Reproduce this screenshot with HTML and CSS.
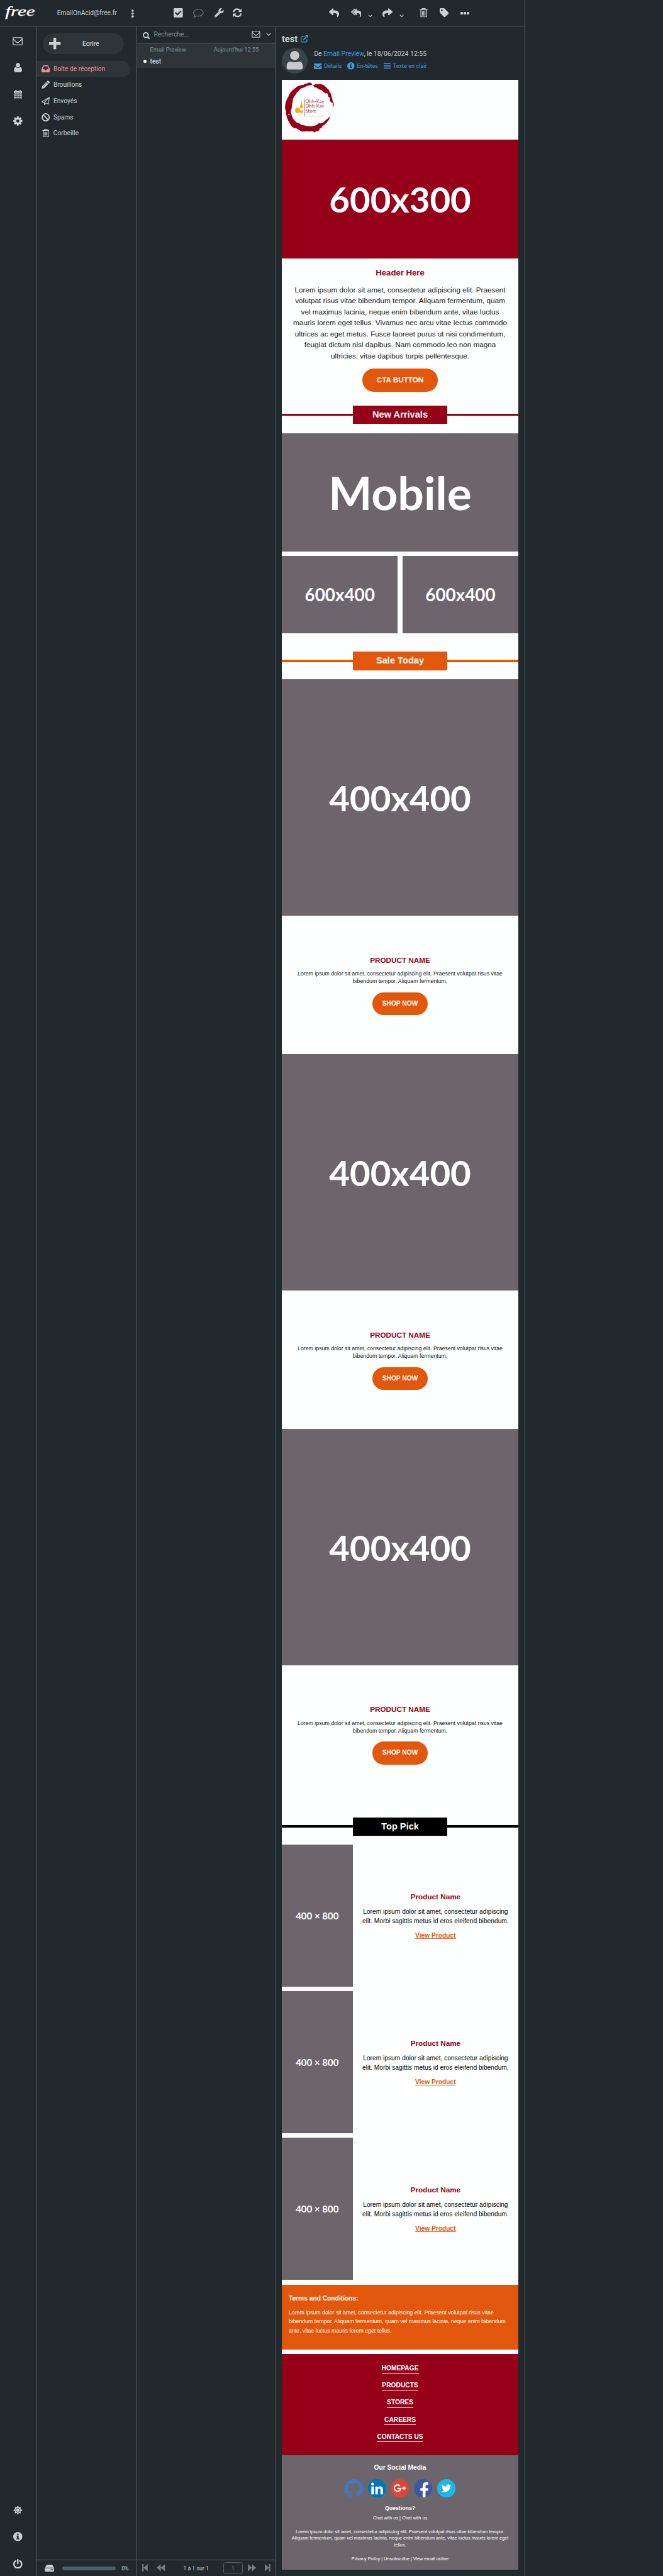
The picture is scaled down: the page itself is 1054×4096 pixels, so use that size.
FILE: index.html
```html
<!DOCTYPE html>
<html lang="fr">
<head>
<meta charset="utf-8">
<title>Boîte de réception</title>
<link rel="stylesheet" href="styles.css">
</head>
<body>
<svg class="sprite" aria-hidden="true">
  <symbol id="i-chevron" viewBox="0 0 10 6"><path d="M1 1l4 4 4-4" fill="none" stroke="currentColor" stroke-width="1.5"/></symbol>
  <symbol id="i-trash" viewBox="0 0 18 20"><path d="M0.5 3.6h17M5.8 3.4V1h6.4v2.4M2.8 4v14.8h12.4V4M6.2 7v9M9 7v9M11.8 7v9" fill="none" stroke="currentColor" stroke-width="1.7"/></symbol>
  <symbol id="i-mail" viewBox="0 0 22 18"><path d="M1.1 1.1h19.8v15.8H1.1zM1.3 4l7.6 7.2q2.1 1.8 4.2 0L20.700 4" fill="none" stroke="currentColor" stroke-width="1.7" stroke-linejoin="round"/></symbol>
  <symbol id="i-reply" viewBox="0 24 512 462"><path fill="currentColor" d="M8.309 189.836L184.313 37.851C199.719 24.546 224 35.347 224 56.015v80.053c160.629 1.839 288 34.032 288 186.258 0 61.441-39.581 122.309-83.333 154.132-13.653 9.931-33.111-2.533-28.077-18.631 45.344-145.012-21.507-183.51-176.59-185.742V360c0 20.7-24.3 31.453-39.687 18.164l-176.004-152c-11.071-9.562-11.086-26.753 0-36.328z"/></symbol>
  <symbol id="i-info" viewBox="0 0 20 20"><circle cx="10" cy="10" r="10" fill="currentColor"/><path class="cut" d="M8.300 3.600h3.400v3H8.300zM6.800 8h4.900v6h1.500v2H6.800v-2h1.500v-4H6.800z"/></symbol>
</svg>

<div class="app">
  <header class="topbar">
    <svg class="brand" viewBox="0 0 72 30"><text x="3" y="21" textLength="65" lengthAdjust="spacingAndGlyphs">free</text></svg>
    <span class="account">EmailOnAcid@free.fr</span>
    <svg class="ic dots-v" viewBox="0 0 5 18"><g fill="currentColor"><circle cx="2.500" cy="2.700" r="2.500"/><circle cx="2.500" cy="9" r="2.500"/><circle cx="2.500" cy="15.300" r="2.500"/></g></svg>
    <svg class="ic t-check" viewBox="0 32 448 448"><path fill="currentColor" d="M400 480H48c-26.510 0-48-21.490-48-48V80c0-26.510 21.490-48 48-48h352c26.510 0 48 21.490 48 48v352c0 26.510-21.490 48-48 48zm-204.686-98.059l184-184c6.248-6.248 6.248-16.379 0-22.627l-22.627-22.627c-6.248-6.248-16.379-6.249-22.628 0L184 302.745l-70.059-70.059c-6.248-6.248-16.379-6.248-22.628 0l-22.627 22.627c-6.248 6.248-6.248 16.379 0 22.627l104 104c6.249 6.250 16.379 6.250 22.628.001z"/></svg>
    <svg class="ic t-comment" viewBox="0 0 23 19"><path d="M11.500 1C5.500 1 1 4.100 1 8.300c0 2.100 1.200 4 3 5.300-.3 1.700-1.200 3-2.300 4.200 2.500 0 4.500-.9 6-2.400 1.200.3 2.500.4 3.800.4 6 0 10.500-3.300 10.500-7.500S17.500 1 11.500 1z" fill="none" stroke="currentColor" stroke-width="1.600" stroke-linejoin="round"/></svg>
    <svg class="ic t-wrench" viewBox="0 0 512 512"><path fill="currentColor" d="M507.730 109.100c-2.240-9.030-13.540-12.090-20.120-5.510l-74.360 74.360-67.880-11.310-11.310-67.880 74.360-74.360c6.620-6.620 3.430-17.900-5.660-20.160-47.380-11.740-99.550.91-136.580 37.930-39.640 39.640-50.550 97.100-34.050 147.200L18.740 402.760c-24.990 24.990-24.990 65.510 0 90.500 24.990 24.990 65.510 24.990 90.500 0l213.210-213.210c50.120 16.710 107.470 5.680 147.370-34.220 37.070-37.070 49.700-89.320 37.910-136.730zM64 472c-13.250 0-24-10.750-24-24 0-13.260 10.750-24 24-24s24 10.740 24 24c0 13.250-10.750 24-24 24z"/></svg>
    <svg class="ic t-sync" viewBox="0 0 20 20"><path d="M1.800 8.500C2.500 4.600 5.900 2 9.800 2c2.700 0 4.800 1.100 6.400 3M18.200 11.500C17.500 15.400 14.100 18 10.200 18c-2.700 0-4.800-1.100-6.400-3" fill="none" stroke="currentColor" stroke-width="3.200"/><path fill="currentColor" d="M19.600.6v7.800h-7.800zM.4 19.400v-7.800h7.800z"/></svg>
    <svg class="ic t-reply"><use href="#i-reply"/></svg>
    <svg class="ic t-replyall" viewBox="0 0 576 462"><path fill="currentColor" d="M8 166L184 13c12-10 28-6 36 6v36L82 178c-5 5-5 14 0 19l138 122v36c-8 12-24 14-36 4L8 203c-11-10-11-27 0-37z"/><path fill="currentColor" d="M130 166L282 13c14-14 38-4 38 18v81c150 2 256 34 256 186 0 62-36 122-76 154-12 10-30-2-26-18 40-145-14-184-154-186v88c0 22-24 32-38 18L130 203c-10-10-10-27 0-37z"/></svg>
    <svg class="ic t-chev"><use href="#i-chevron"/></svg>
    <svg class="ic t-forward"><use href="#i-reply"/></svg>
    <svg class="ic t-chev"><use href="#i-chevron"/></svg>
    <svg class="ic t-trash"><use href="#i-trash"/></svg>
    <svg class="ic t-tag" viewBox="0 0 20 20"><path fill="currentColor" fill-rule="evenodd" d="M0 1.800V8.500q0 1 .8 1.800l8.700 9q1 .9 2 0l8-7.300q.9-1 0-2L10.500.8Q9.700 0 8.600 0H1.800Q0 0 0 1.800zM4.600 2.800a1.800 1.800 0 1 0 .01 0z"/></svg>
    <svg class="ic t-more" viewBox="0 0 19 6"><g fill="currentColor"><rect width="5.400" height="6" rx="1.500"/><rect x="6.800" width="5.400" height="6" rx="1.500"/><rect x="13.600" width="5.400" height="6" rx="1.500"/></g></svg>
  </header>

  <nav class="rail">
    <svg class="ic r-mail"><use href="#i-mail"/></svg>
    <svg class="ic r-user" viewBox="0 0 18 21"><path fill="currentColor" d="M9 0c3 0 4.600 2.200 4.600 5.200S11.700 10.600 9 10.600 4.400 8.200 4.400 5.200 6 0 9 0zM4.300 9.400C5.600 11 7.200 11.700 9 11.700s3.400-.7 4.700-2.300C16.600 9.900 18 12 18 16.500c0 3-1.300 4.500-3.500 4.500h-11C1.300 21 0 19.500 0 16.500 0 12 1.400 9.900 4.300 9.400z"/></svg>
    <svg class="ic r-cal" viewBox="0 0 18 20"><path fill="currentColor" d="M0 4q0-1.500 1.500-1.500H3V1.200a1.600 1.600 0 0 1 3.200 0v1.300h5.600V1.200a1.600 1.600 0 0 1 3.200 0v1.300h1.500Q18 2.500 18 4v14.500q0 1.500-1.500 1.500h-15Q0 20 0 18.500z"/><path d="M1.500 6.700h15M1.500 10.700h15M1.500 14.600h15M1.500 18.400h15M1.500 6.700v11.700M5.200 6.700v11.700M9 6.700v11.700M12.800 6.700v11.700M16.500 6.700v11.700M4.600 1v3.200M13.400 1v3.200" class="cutline"/></svg>
    <svg class="ic r-gear" viewBox="0 0 20 20"><path fill="currentColor" fill-rule="evenodd" d="M8.300 0h3.400l.5 2.700 1.600.7L16.100 1.800l2.300 2.300-1.600 2.300.6 1.600 2.600.4v3.300l-2.600.5-.7 1.600 1.600 2.300-2.300 2.300-2.300-1.600-1.600.7-.5 2.600H8.300l-.5-2.600-1.600-.7-2.300 1.600-2.300-2.300 1.600-2.300-.7-1.600L0 11.700V8.400l2.600-.5.7-1.600L1.700 4 4 1.800l2.300 1.600 1.500-.7zM10 6.700a3.300 3.300 0 1 0 .01 0z"/></svg>
    <span class="grow"></span>
    <svg class="ic r-sun" viewBox="0 0 20 20"><path fill="currentColor" fill-rule="evenodd" d="M10 0l2.200 3.500L16.500 3l-.5 4.500L20 10l-4 2.500.5 4.500-4.300-.5L10 20l-2.200-3.500L3.500 17l.5-4.500L0 10l4-2.500L3.500 3l4.300.5zM10 5a5 5 0 1 0 .01 0zM10 6.200a3.800 3.800 0 1 1-.01 0z"/></svg>
    <svg class="ic r-info"><use href="#i-info"/></svg>
    <svg class="ic r-power" viewBox="0 0 20 21"><path d="M5.600 4A8.200 8.200 0 0 0 1.600 11a8.400 8.400 0 0 0 16.800 0A8.200 8.200 0 0 0 14.400 4M10 1.500v8.500" fill="none" stroke="currentColor" stroke-width="3.200" stroke-linecap="round"/></svg>
  </nav>

  <aside class="folders">
    <div class="compose"><svg class="ic plus" viewBox="0 0 25 25"><path fill="currentColor" d="M9.500 0h6v9.500H25v6h-9.500V25h-6v-9.500H0v-6h9.500z"/></svg><b>Ecrire</b></div>
    <ul class="folder-list">
      <li class="selected"><svg class="ic" viewBox="0 0 18 18"><path fill="currentColor" fill-rule="evenodd" d="M4 1h10l4 8v7.500H0V9zM5 3.500L2.600 9.300H6l1.200 2.500h3.600l1.200-2.500h3.400L13 3.500z"/></svg>Boîte de réception</li>
      <li><svg class="ic" viewBox="0 0 18 18"><path fill="currentColor" d="M13 .8q1-1 2 0L17.400 3.200q1 1 0 2L15.600 7 11.200 2.600zM10.300 3.500l4.400 4.400-9 9L.5 17.600.900 12.900z"/><path class="cutline" d="M3.600 13.600l8-8"/></svg>Brouillons</li>
      <li><svg class="ic" viewBox="0 0 18 18"><path d="M17 1L1 10.500l4.500 2.200L17 1l-2.200 14.500-5.400-2.200L6.500 16.800l-.6-4" fill="none" stroke="currentColor" stroke-width="1.500" stroke-linejoin="round"/></svg>Envoyés</li>
      <li><svg class="ic" viewBox="0 0 18 18"><circle cx="9" cy="9" r="7.700" fill="none" stroke="currentColor" stroke-width="2.400"/><path d="M3.500 3.500l11 11" stroke="currentColor" stroke-width="2.400"/></svg>Spams</li>
      <li><svg class="ic bin"><use href="#i-trash"/></svg>Corbeille</li>
    </ul>
    <footer class="quota">
      <svg class="ic drive" viewBox="0 0 21 15"><path fill="currentColor" d="M4 1Q4.500 0 6 0h9q1.500 0 2 1l3.500 5.500H.5zM0 7.500h21V13q0 2-2 2H2q-2 0-2-2z"/><path class="cut" d="M13 10h2v2h-2zM16.500 10h2v2h-2z"/></svg>
      <span class="meter"></span><span class="pct">0%</span>
    </footer>
  </aside>

  <section class="messages">
    <div class="search">
      <svg class="ic s-glass" viewBox="0 0 17 17"><circle cx="7" cy="7" r="5.500" fill="none" stroke="currentColor" stroke-width="2.700"/><path d="M11 11l4.700 4.700" stroke="currentColor" stroke-width="3.200"/></svg>
      <span>Recherche...</span>
      <svg class="ic s-mail"><use href="#i-mail"/></svg>
      <svg class="ic s-chev"><use href="#i-chevron"/></svg>
    </div>
    <article class="row">
      <div class="meta"><span>Email Preview</span><time>Aujourd’hui 12:55</time></div>
      <div class="subject">test</div>
    </article>
    <span class="grow"></span>
    <footer class="pager">
      <svg class="ic p-first" viewBox="0 0 12 16"><path fill="currentColor" d="M0 0h3v16H0zM3 8l9-8v16z"/></svg>
      <svg class="ic p-prev" viewBox="0 0 18 16"><path fill="currentColor" d="M0 8l9-8v16zM9 8l9-8v16z"/></svg>
      <span class="range">1 à 1 sur 1</span>
      <span class="page">1</span>
      <svg class="ic p-next" viewBox="0 0 18 16"><path fill="currentColor" d="M0 0l9 8-9 8zM9 0l9 8-9 8z"/></svg>
      <svg class="ic p-last" viewBox="0 0 12 16"><path fill="currentColor" d="M0 0l9 8-9 8zM9 0h3v16H9z"/></svg>
    </footer>
  </section>

  <main class="reader">
    <h1>test <svg class="ic open" viewBox="0 0 17 16"><path d="M9 2.500H3Q1 2.500 1 4.500V13q0 2 2 2h8.500q2 0 2-2V9" fill="none" stroke="currentColor" stroke-width="1.700"/><path d="M5.500 10.500L13 3" stroke="currentColor" stroke-width="2.400"/><path fill="currentColor" d="M10 0h7v7z"/></svg></h1>
    <div class="from">
      <svg class="avatar" viewBox="0 0 56 56"><circle class="disc" cx="28" cy="28" r="28"/><ellipse cx="28" cy="17" rx="10" ry="10"/><path d="M10.500 41c0-7 3-11 8-11.300 6 2.200 13 2.200 19 0 5 .3 8 4.300 8 11.300v2q0 4-4 4h-27q-4 0-4-4z"/></svg>
      <div>
        <p class="line">De <a>Email Preview</a>, le 18/06/2024 12:55</p>
        <p class="links">
          <a><svg class="ic l-mail" viewBox="0 0 17 13"><path fill="currentColor" d="M0 0h17v2L8.500 8.500 0 2zM0 4l8.500 6.300L17 4v9H0z"/></svg>Détails</a>
          <a><svg class="ic l-info"><use href="#i-info"/></svg>En-têtes</a>
          <a><svg class="ic l-list" viewBox="0 0 15 14"><path fill="currentColor" d="M0 0h15v2H0zM0 4h15v2H0zM0 8h15v2H0zM0 12h15v2H0z"/></svg>Texte en clair</a>
        </p>
      </div>
    </div>

    <div class="mail">
      <div class="masthead">
        <svg class="store" viewBox="36 42 390 390">
          <path fill="#960018" d="M228 62l-8-3-14 2-6 5-14 2-8 6-16 2-14 5-14 5-14 12-12 10-14 16-10 12-4 14-10 16-8 20-4 22-1 18 6 20 2 22 4 18 8 20 14 24 10 16 14 10 16 2 20 12 18 9 26-2 24 1 16-2 14 9 10-8 14-2 10-8-2-8 14-2 4-12 14-10 16-14 14-20 9-22-14 13-18 14-14 14-16 6-10-2-10 4-4 7-16 5-22 4-24-1-20-4-22-4-12-10-16-4-12-12-14-16-8-22-2-8-4-20 6-14 2-20 4-20 3-24 12-20 12-18 16-18 14-12 20-6 18-10 16-3 8-1 10-4z"/>
          <path fill="#960018" d="M239 79l16-8 24-2 18 3 18 8 14 14 12 12 8 16 8 12 4 18 4 14 4 20 6 8-1 12-4 18-3-16 2-14-8-2-10-12-3-10 2-12-10-4-4-14-4-12-12 2-14-10-12-11-16-6-16-10-12-3z"/>
          <path fill="#fdfffe" d="M78 266l4-5 2 7-5 4zM84 270l5-3 1 6z"/>
          <path stroke="#a83245" stroke-width="3" d="M184 165v114"/>
          <path fill="#fba919" d="M160 186h8v12q0 5 3 9 3 4 3 10v36q0 5-4 5h-12q-4 0-4-5v-36q0-6 3-10 3-4 3-9zM124 222q10-3 18 4 4-2 8 0 5 5 4 15 0 8-6 15-5 3-10 1-10 2-13-6-4-8-2-17 3-5 8-6-5-1-7-6z"/>
          <path fill="#fdfffe" d="M155 226h18v15h-18z"/>
          <g class="store-name"><text x="190" y="192" textLength="122" lengthAdjust="spacingAndGlyphs">Ohh-Kay</text><text x="190" y="224" textLength="122" lengthAdjust="spacingAndGlyphs">Ohh-Kay</text><text x="190" y="257" textLength="73" lengthAdjust="spacingAndGlyphs">Store</text></g>
          <text class="store-tag" x="190" y="278" textLength="123" lengthAdjust="spacingAndGlyphs">Fake it, till you make it</text>
        </svg>
      </div>
      <div class="ph hero">600x300</div>
      <section class="intro">
        <h2>Header Here</h2>
        <p>Lorem ipsum dolor sit amet, consectetur adipiscing elit. Praesent<br>volutpat risus vitae bibendum tempor. Aliquam fermentum, quam<br>vel maximus lacinia, neque enim bibendum ante, vitae luctus<br>mauris lorem eget tellus. Vivamus nec arcu vitae lectus commodo<br>ultrices ac eget metus. Fusce laoreet purus ut nisi condimentum,<br>feugiat dictum nisl dapibus. Nam commodo leo non magna<br>ultricies, vitae dapibus turpis pellentesque.</p>
        <a class="btn cta">CTA BUTTON</a>
      </section>
      <div class="banner red"><b>New Arrivals</b></div>
      <div class="ph mobile">Mobile</div>
      <div class="pair"><div class="ph">600x400</div><div class="ph">600x400</div></div>
      <div class="banner orange"><b>Sale Today</b></div>
      <div class="ph square">400x400</div>
      <section class="product"><h3>PRODUCT NAME</h3><p>Lorem ipsum dolor sit amet, consectetur adipiscing elit. Praesent volutpat risus vitae<br>bibendum tempor. Aliquam fermentum,</p><a class="btn shop">SHOP NOW</a></section>
      <div class="ph square">400x400</div>
      <section class="product"><h3>PRODUCT NAME</h3><p>Lorem ipsum dolor sit amet, consectetur adipiscing elit. Praesent volutpat risus vitae<br>bibendum tempor. Aliquam fermentum,</p><a class="btn shop">SHOP NOW</a></section>
      <div class="ph square">400x400</div>
      <section class="product"><h3>PRODUCT NAME</h3><p>Lorem ipsum dolor sit amet, consectetur adipiscing elit. Praesent volutpat risus vitae<br>bibendum tempor. Aliquam fermentum,</p><a class="btn shop">SHOP NOW</a></section>
      <div class="banner black"><b>Top Pick</b></div>
      <div class="picks">
        <div class="pick"><div class="ph">400 × 800</div><div class="info"><h3>Product Name</h3><p>Lorem ipsum dolor sit amet, consectetur adipiscing<br>elit. Morbi sagittis metus id eros eleifend bibendum.</p><a>View Product</a></div></div>
        <div class="pick"><div class="ph">400 × 800</div><div class="info"><h3>Product Name</h3><p>Lorem ipsum dolor sit amet, consectetur adipiscing<br>elit. Morbi sagittis metus id eros eleifend bibendum.</p><a>View Product</a></div></div>
        <div class="pick"><div class="ph">400 × 800</div><div class="info"><h3>Product Name</h3><p>Lorem ipsum dolor sit amet, consectetur adipiscing<br>elit. Morbi sagittis metus id eros eleifend bibendum.</p><a>View Product</a></div></div>
      </div>
      <section class="terms"><h4>Terms and Conditions:</h4><p>Lorem ipsum dolor sit amet, consectetur adipiscing elit. Praesent volutpat risus vitae<br>bibendum tempor. Aliquam fermentum, quam vel maximus lacinia, neque enim bibendum<br>ante, vitae luctus mauris lorem eget tellus.</p></section>
      <nav class="sitemap"><a>HOMEPAGE</a><a>PRODUCTS</a><a>STORES</a><a>CAREERS</a><a>CONTACTS US</a></nav>
      <footer class="foot">
        <h4>Our Social Media</h4>
        <div class="social">
          <svg viewBox="0 0 16 16"><path fill="#3f78c5" d="M8 0C3.580 0 0 3.580 0 8c0 3.540 2.290 6.530 5.470 7.590.4.070.55-.17.55-.38 0-.19-.01-.82-.01-1.490-2.010.37-2.530-.49-2.690-.94-.09-.23-.48-.94-.82-1.130-.28-.15-.68-.52-.01-.53.63-.01 1.080.58 1.230.82.72 1.210 1.870.87 2.330.66.07-.52.28-.87.51-1.070-1.780-.2-3.640-.89-3.640-3.950 0-.87.31-1.590.82-2.150-.08-.2-.36-1.020.08-2.120 0 0 .67-.21 2.200.82.64-.18 1.320-.27 2-.27s1.360.09 2 .27c1.530-1.040 2.200-.82 2.200-.82.44 1.100.16 1.920.08 2.120.51.56.82 1.270.82 2.150 0 3.070-1.870 3.750-3.650 3.950.29.25.54.73.54 1.480 0 1.070-.01 1.930-.01 2.200 0 .21.15.46.55.38A8.010 8.010 0 0 0 16 8c0-4.420-3.580-8-8-8z"/></svg>
          <svg viewBox="0 0 40 40"><circle cx="20" cy="20" r="20" fill="#0077b7"/><path fill="#fff" d="M7.300 16h5.400v17H7.300zM16 16h5v2.300q1.800-2.700 5.200-2.700 6.300 0 6.300 7.800V33h-5.400v-8.800q0-4-2.700-4-3 0-3 4V33H16z"/><circle cx="10" cy="10.500" r="3.100" fill="#fff"/></svg>
          <svg viewBox="0 0 40 40"><circle cx="20" cy="20" r="20" fill="#dc4538"/><path d="M20.300 14.800A7 7 0 1 0 22 20.300H15" fill="none" stroke="#fff" stroke-width="2.900"/><path d="M29 15.500v8M25 19.500h8" stroke="#fff" stroke-width="2.200"/></svg>
          <svg viewBox="0 0 40 40"><circle cx="20" cy="20" r="20" fill="#3c599f"/><path fill="#fff" d="M19 40V25.300h-5v-5.800h5v-4.300q0-8.600 8.300-8.600 2.500 0 4 .3v5.200h-3q-3 0-3 3.200v4.200h5.900l-.8 5.800H25.300v14q-3 .9-6.300.700z"/></svg>
          <svg viewBox="0 0 40 40"><circle cx="20" cy="20" r="20" fill="#1db7ea"/><path fill="#fff" transform="translate(9.500 9.200) scale(.87)" d="M23.954 4.569c-.885.389-1.830.654-2.825.775 1.014-.611 1.794-1.574 2.163-2.723-.951.555-2.005.959-3.127 1.184-.896-.959-2.173-1.559-3.591-1.559-2.717 0-4.920 2.203-4.920 4.917 0 .39.045.765.127 1.124C7.691 8.094 4.066 6.130 1.640 3.161c-.427.722-.666 1.561-.666 2.475 0 1.710.87 3.213 2.188 4.096-.807-.026-1.566-.248-2.228-.616v.061c0 2.385 1.693 4.374 3.946 4.827-.413.111-.849.171-1.296.171-.314 0-.615-.03-.916-.086.631 1.953 2.445 3.377 4.604 3.417-1.680 1.319-3.809 2.105-6.102 2.105-.39 0-.779-.023-1.170-.067 2.189 1.394 4.768 2.209 7.557 2.209 9.054 0 13.999-7.496 13.999-13.986 0-.209 0-.42-.015-.63.961-.689 1.800-1.560 2.460-2.548l-.047-.02z"/></svg>
        </div>
        <h5>Questions?</h5>
        <p class="chat">Chat with us | Chat with us</p>
        <p class="legal">Lorem ipsum dolor sit amet, consectetur adipiscing elit. Praesent volutpat risus vitae bibendum tempor.<br>Aliquam fermentum, quam vel maximus lacinia, neque enim bibendum ante, vitae luctus mauris lorem eget<br>tellus.</p>
        <p class="policy">Privacy Policy | Unsubscribe | View email online</p>
      </footer>
    </div>
  </main>
</div>
</body>
</html>
```
FILE: styles.css
```css
/* 1rem equals ten layout units; the whole page scales from this one value */
html { font-size: 7.3195px; }
* { box-sizing: border-box; }
body { margin: 0; background: #21292c; color: #c5d1d3; font-family: Roboto, "Liberation Sans", sans-serif; font-size: 1.4rem; }
h1, h2, h3, h4, h5, p, ul { margin: 0; padding: 0; font-weight: normal; }
ul { list-style: none; }
svg { display: block; flex: none; }
.sprite { display: none; }
.cut { fill: #21292c; }
.cutline { fill: none; stroke: #21292c; stroke-width: 1; }
.grow { flex: 1; }

.app { display: grid; grid-template-columns: 7.9rem 21.9rem 30rem 54.3rem; grid-template-rows: 5.8rem minmax(0, 1fr); height: 559.6rem; overflow: hidden; }
.topbar { grid-column: 1 / -1; display: flex; align-items: center; padding-left: .8rem; border-bottom: 1px solid #4d6066; border-right: 1px solid #4d6066; }
.brand { width: 7.2rem; height: 3rem; margin-top: .1rem; overflow: visible; font: italic 28px "Liberation Serif", serif; fill: #fff; stroke: #fff; stroke-width: .4; }
.account { width: 16.2rem; margin-left: 4.4rem; white-space: nowrap; margin-top: -.1rem; }
.dots-v { width: .5rem; height: 1.8rem; margin-top: .3rem; }
.t-check { width: 2rem; height: 2rem; margin-left: 8.6rem; }
.t-comment { width: 2.3rem; height: 1.9rem; margin-left: 2.3rem; color: #707a7d; }
.t-wrench { width: 2rem; height: 2rem; margin-left: 2.3rem; }
.t-sync { width: 2rem; height: 2rem; margin-left: 1.9rem; }
.t-reply { width: 2.2rem; height: 2rem; margin-left: 19rem; }
.t-replyall { width: 2.3rem; height: 2rem; margin-left: 2.5rem; }
.t-chev { width: 1rem; height: .6rem; margin: 1.3rem 0 0 1.5rem; }
.t-forward { width: 2.2rem; height: 2rem; margin-left: 2.1rem; transform: scaleX(-1); }
.t-trash { width: 1.8rem; height: 2rem; margin-left: 3.4rem; }
.t-tag { width: 2rem; height: 2rem; margin-left: 2.5rem; }
.t-more { width: 1.9rem; height: .6rem; margin-left: 2.5rem; }

.rail { display: flex; flex-direction: column; align-items: center; padding: 2.2rem 0 1.6rem; border-right: 1px solid #4d6066; }
.r-mail { width: 2.2rem; height: 1.8rem; }
.r-user { width: 1.8rem; height: 2rem; margin-top: 3.9rem; }
.r-cal { width: 1.8rem; height: 2rem; margin-top: 3.8rem; }
.r-gear { width: 2rem; height: 2rem; margin-top: 3.8rem; }
.r-sun, .r-info { width: 2rem; height: 2rem; margin-bottom: 3.8rem; }
.r-power { width: 2rem; height: 2.1rem; }

.folders { display: flex; flex-direction: column; border-right: 1px solid #4d6066; }
.compose { display: flex; align-items: center; width: 17.6rem; height: 4.6rem; margin: 1.4rem 0 1.4rem 1.4rem; padding-left: 1.4rem; border-radius: 2.3rem; background: #2d3538; color: #bcbfc0; }
.plus { width: 2.5rem; height: 2.5rem; color: #cfd2d3; }
.compose b { margin-left: 4.7rem; }
.folder-list li { display: flex; align-items: center; width: 20.4rem; height: 3.5rem; padding-left: 1.1rem; border-radius: 0 1.7rem 1.7rem 0; white-space: nowrap; }
.folder-list .ic { width: 1.8rem; height: 1.8rem; margin-right: .8rem; }
.folder-list .bin { width: 1.6rem; margin: 0 .9rem 0 .1rem; }
.folder-list .selected { background: #2d3538; color: #ef9096; }
.quota { display: flex; align-items: center; height: 3.5rem; margin-top: auto; padding-left: 1.8rem; border-top: 1px solid #4d6066; font-size: 1.2rem; }
.drive { width: 2.1rem; height: 1.5rem; margin-bottom: .1rem; }
.meter { width: 11.6rem; height: .8rem; margin: .2rem 1.3rem 0 1.7rem; border-radius: .4rem; background: #4d6066; }

.messages { display: flex; flex-direction: column; border-right: 1px solid #4d6066; }
.search { display: flex; align-items: center; height: 3.6rem; padding-left: 1.2rem; border-bottom: 1px solid #4d6066; color: #7b959b; }
.search span { width: 21.2rem; margin: -.2rem 0 0 .8rem; }
.search .ic { color: #c5d1d3; }
.s-glass { width: 1.6rem; height: 1.6rem; margin-top: .4rem; }
.s-mail { width: 1.9rem; height: 1.5rem; margin-top: -.3rem; }
.s-chev { width: 1.1rem; height: .7rem; margin: -.1rem 0 0 1.3rem; }
.row { height: 5.4rem; padding-left: 2.8rem; background: #2d3538; }
.meta { display: flex; justify-content: space-between; width: 23.6rem; height: 2.6rem; line-height: 2.6rem; color: #7b959b; font-size: 1.26rem; white-space: nowrap; }
.subject { display: flex; align-items: center; height: 2.6rem; margin-left: -1.4rem; color: #fff; }
.subject::before { content: ""; width: .6rem; height: .6rem; margin-right: .8rem; border-radius: 50%; background: #fff; }
.pager { display: flex; align-items: center; height: 3.5rem; padding-left: 1.1rem; border-top: 1px solid #4d6066; color: #737c7f; font-size: 1.26rem; }
.pager .ic { height: 1.6rem; margin-bottom: .2rem; }
.p-first, .p-last { width: 1.2rem; }
.p-prev { width: 1.8rem; margin-left: 1.9rem; }
.range { width: 8.7rem; margin-left: 4rem; color: #c5d1d3; font-size: 1.2rem; white-space: nowrap; }
.page { width: 4.2rem; height: 2.6rem; border: 1px solid #4d6066; border-radius: .5rem; line-height: 2.5rem; text-align: center; }
.p-next { width: 1.8rem; margin: 0 1.9rem 0 1.1rem; }

.reader { padding: 1.4rem 0 0 1.4rem; border-right: 1px solid #4d6066; }
.reader h1 { display: flex; align-items: center; height: 2.6rem; font-size: 2rem; font-weight: bold; }
.reader a, .open { color: #389fe0; }
.open { width: 1.7rem; height: 1.6rem; margin-left: .6rem; }
.from { display: flex; height: 5.6rem; margin: .6rem 0 1.4rem; }
.avatar { width: 5.6rem; height: 5.6rem; margin-right: 1.4rem; fill: #c9c9c9; }
.avatar .disc { fill: #374549; }
.line { height: 2.8rem; line-height: 2.8rem; white-space: nowrap; font-size: 1.43rem; }
.links { display: flex; align-items: center; height: 2.2rem; font-size: 1.26rem; white-space: nowrap; }
.links a { display: flex; align-items: center; margin-right: 1.2rem; }
.links .ic { margin-right: .5rem; }
.l-mail { width: 1.7rem; height: 1.3rem; margin-top: .2rem; }
.l-info { width: 1.6rem; height: 1.6rem; margin-top: .2rem; }
.l-list { width: 1.5rem; height: 1.4rem; margin-top: .2rem; }

/* newsletter */
.mail { width: 51.4rem; background: #fdfffe; color: #15161a; font-family: "Liberation Sans", sans-serif; text-align: center; white-space: nowrap; }
.mail h2, .mail h3 { color: #960018; font-weight: bold; }
.masthead { height: 13rem; }
.store { width: 13rem; height: 13rem; }
.store-name { font: 28px Lato, sans-serif; fill: #a83245; }
.store-tag { font: 10px Lato, sans-serif; fill: #555; }
.ph { display: flex; align-items: center; justify-content: center; background: #6c666c; color: #fff; font-family: Lato, sans-serif; font-weight: bold; }
.hero { height: 25.7rem; background: #960018; font-size: 7.7rem; }
.mobile { height: 25.7rem; font-size: 10rem; }
.square { height: 51.4rem; font-size: 7.7rem; }
.intro { height: 32rem; padding-top: 1.9rem; }
.intro h2 { font-size: 1.8rem; line-height: 2.7rem; }
.intro p { margin: 1rem 0 1.6rem; font-size: 1.6rem; line-height: 2.4rem; }
.btn { display: block; height: 5rem; margin: 0 auto; border-radius: 2.5rem; background: #e3570c; font-weight: bold; line-height: 5rem; }
.mail .btn { color: #fff; }
.cta { width: 16.5rem; font-size: 1.6rem; }
.shop { width: 12rem; font-size: 1.4rem; }
.banner { display: flex; align-items: center; height: 4rem; margin-bottom: 2rem; color: #fff; font-size: 2rem; }
.banner::before, .banner::after { content: ""; flex: 1; height: .5rem; background: var(--c); }
.banner b { width: 20.6rem; line-height: 4rem; background: var(--c); }
.red { --c: #960018; }
.orange { --c: #e3570c; }
.black { --c: #000; }
.pair { display: flex; gap: 1rem; margin: 1rem 0 4rem; }
.pair .ph { flex: 1; height: 16.8rem; font-size: 3.8rem; }
.product { height: 30rem; padding-top: 8.4rem; }
.product h3 { font-size: 1.6rem; line-height: 2.4rem; }
.product p { margin: 1.1rem 0 1.5rem; font-size: 1.2rem; line-height: 1.6rem; }
.black { margin-top: 3rem; }
.pick { display: flex; height: 30.84rem; margin-bottom: 1rem; }
.pick .ph { width: 15.4rem; font-size: 2.05rem; }
.info { flex: 1; display: flex; flex-direction: column; justify-content: center; align-items: center; font-size: 1.4rem; line-height: 2.1rem; color: #000; }
.info h3 { font-size: 1.6rem; line-height: 2.4rem; }
.info p { margin: 1rem 0; }
.mail .info a { color: #e3570c; font-weight: bold; text-decoration: underline; }
.terms { height: 14.1rem; margin-bottom: 1rem; padding: 2rem 1.5rem; background: #e3570c; color: #fff; text-align: left; }
.terms h4 { margin-bottom: 1rem; font-size: 1.4rem; font-weight: bold; line-height: 2.1rem; }
.terms p { font-size: 1.2rem; line-height: 2rem; }
.sitemap { display: flex; flex-direction: column; align-items: center; gap: 1.5rem; height: 22rem; padding-top: 2rem; background: #960018; }
.mail .sitemap a { border-bottom: .2rem solid #fff; color: #fff; font-size: 1.4rem; font-weight: bold; line-height: 2.1rem; }
.foot { height: 24.8rem; padding-top: 1.6rem; background: #6c666c; color: #fff; font-size: 1rem; line-height: 1.4rem; }
.foot h4 { font-size: 1.4rem; font-weight: bold; line-height: 2.1rem; }
.social { display: flex; justify-content: center; gap: 1rem; margin: 1.5rem 0 1.4rem; }
.social svg { width: 4rem; height: 4rem; }
.foot h5 { font-size: 1.2rem; font-weight: bold; line-height: 1.9rem; }
.chat { margin: .5rem 0 1.6rem; }
.legal { margin-bottom: 1.6rem; }
```
